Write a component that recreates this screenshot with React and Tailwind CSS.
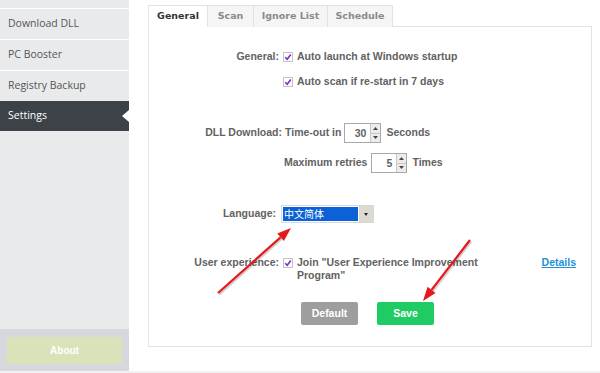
import React from 'react';

const navItems = ['Download DLL', 'PC Booster', 'Registry Backup'];
const tabs = ['General', 'Scan', 'Ignore List', 'Schedule'];

function Check() {
  return (
    <span className="w-[10px] h-[10px] border border-[#c4c4c4] bg-white flex items-center justify-center shrink-0">
      <svg width="8" height="8" viewBox="0 0 8 8">
        <path d="M1.2 4.2 L3.2 6.2 L6.8 1.6" fill="none" stroke="#7a2ccf" strokeWidth="1.6" />
      </svg>
    </span>
  );
}

function Spinner({ value, width }) {
  return (
    <div className={`h-[20px] ${width} border border-[#a9a9a9] bg-white flex`}>
      <span className="flex-1 text-right pr-[4px] leading-[18px]">{value}</span>
      <span className="w-[10px] border-l border-[#c8c8c8] flex flex-col bg-[#ececec]">
        <span className="flex-1 flex items-center justify-center border-b border-[#c8c8c8]">
          <svg width="5" height="3" viewBox="0 0 5 3"><path d="M0 3 L2.5 0 L5 3Z" fill="#444" /></svg>
        </span>
        <span className="flex-1 flex items-center justify-center">
          <svg width="5" height="3" viewBox="0 0 5 3"><path d="M0 0 L2.5 3 L5 0Z" fill="#444" /></svg>
        </span>
      </span>
    </div>
  );
}

function Arrow({ x1, y1, x2, y2 }) {
  const a = Math.atan2(y2 - y1, x2 - x1);
  const len = 14, half = 5;
  const bx = x2 - len * Math.cos(a), by = y2 - len * Math.sin(a);
  const p1 = `${bx + half * Math.sin(a)},${by - half * Math.cos(a)}`;
  const p2 = `${bx - half * Math.sin(a)},${by + half * Math.cos(a)}`;
  return (
    <g>
      <line x1={x1 + 1} y1={y1 + 1.5} x2={bx + 1} y2={by + 1.5} stroke="rgba(0,0,0,0.18)" strokeWidth="2.5" />
      <line x1={x1} y1={y1} x2={bx} y2={by} stroke="#e3191c" strokeWidth="2.2" />
      <polygon points={`${x2},${y2} ${p1} ${p2}`} fill="#e3191c" />
    </g>
  );
}

export default function App() {
  return (
    <div className="relative w-[600px] h-[373px] bg-white flex overflow-hidden font-['Liberation_Sans',Arial,sans-serif]">
      {/* sidebar */}
      <aside className="w-[129px] h-[371px] bg-[#e9eaec] flex flex-col font-['Open_Sans',sans-serif] text-[10.5px] text-[#555]">
        <div className="h-[9px] border-b border-white" />
        {navItems.map((n, i) => (
          <div key={n} className={`${i === 2 ? 'h-[30px]' : 'h-[31px]'} ${i < 2 ? 'border-b border-white' : ''} flex items-center pl-[8px]`}>
            {n}
          </div>
        ))}
        <div className="relative h-[30px] bg-[#3d4249] text-white flex items-center pl-[8px]">
          Settings
          <span className="absolute right-0 top-[9px] w-0 h-0 border-y-[6px] border-y-transparent border-r-[7px] border-r-white" />
        </div>
        <div className="flex-1" />
        <div className="h-[42px] bg-[#d5d8dc] px-[7px] pt-[8px]">
          <div className="h-[27px] bg-[#d8e3ba] text-white font-['Liberation_Sans',sans-serif] font-bold text-[10px] flex items-center justify-center">
            About
          </div>
        </div>
      </aside>

      {/* main */}
      <main className="flex-1 pl-[19px] pt-[5px] text-[10.5px] font-bold text-[#626262]">
        <div className="flex h-[22px] text-[9.5px] font-['DejaVu_Sans',sans-serif]">
          {tabs.map((t, i) => (
            <div
              key={t}
              className={
                i === 0
                  ? 'w-[60px] bg-white border border-b-0 border-[#e2e2e2] flex items-center justify-center text-[#333] relative z-10'
                  : `${i === 1 ? 'w-[46px]' : i === 2 ? 'w-[74px]' : 'w-[65px]'} bg-[#f5f5f5] border border-l-0 border-b-0 border-[#e2e2e2] flex items-center justify-center text-[#8a8a8a]`
              }
            >
              {t}
            </div>
          ))}
        </div>
        <div className="w-[444px] h-[321px] border border-[#e2e2e2] -mt-px flex flex-col">
          <div className="flex items-center h-[20px] mt-[20px]">
            <span className="w-[130px] text-right">General:</span>
            <span className="ml-[4px]"><Check /></span>
            <span className="ml-[4px]">Auto launch at Windows startup</span>
          </div>
          <div className="flex items-center h-[20px] mt-[5px]">
            <span className="w-[130px]" />
            <span className="ml-[4px]"><Check /></span>
            <span className="ml-[4px]">Auto scan if re-start in 7 days</span>
          </div>

          <div className="flex items-center h-[20px] mt-[31px]">
            <span className="w-[133px] text-right">DLL Download:</span>
            <span className="ml-[3px]">Time-out in</span>
            <span className="ml-[3px]"><Spinner value="30" width="w-[37px]" /></span>
            <span className="ml-[5px]">Seconds</span>
          </div>
          <div className="flex items-center h-[20px] mt-[10px]">
            <span className="w-[134px]" />
            <span className="ml-[1px]">Maximum retries</span>
            <span className="ml-[4px]"><Spinner value="5" width="w-[36px]" /></span>
            <span className="ml-[5px]">Times</span>
          </div>

          <div className="flex items-center h-[20px] mt-[31px]">
            <span className="w-[127px] text-right">Language:</span>
            <div className="ml-[5px] h-[18px] w-[93px] border border-[#d8d8d8] bg-white flex">
              <span className="flex-1 m-[1px] bg-[#0a62d6] text-white font-normal text-[10px] leading-[14px] pl-[1px] font-['Noto_Sans_CJK_SC',sans-serif]">
                中文简体
              </span>
              <span className="w-[14px] bg-[#dcdad0] flex items-center justify-center">
                <svg width="4" height="3" viewBox="0 0 4 3"><path d="M0 0 L2 3 L4 0Z" fill="#222" /></svg>
              </span>
            </div>
          </div>

          <div className="flex items-start mt-[32px] leading-[13px]">
            <span className="w-[130px] text-right">User experience:</span>
            <span className="ml-[4px] mt-[2px]"><Check /></span>
            <span className="ml-[4px] w-[195px]">Join "User Experience Improvement Program"</span>
            <span className="ml-auto mr-[15px] text-[#1d90d8] underline">Details</span>
          </div>

          <div className="flex mt-[20px] pl-[152px] gap-[19px]">
            <div className="w-[57px] h-[23px] rounded-[2px] bg-[#9e9e9e] text-white flex items-center justify-center">Default</div>
            <div className="w-[57px] h-[23px] rounded-[2px] bg-[#1fcb63] text-white flex items-center justify-center">Save</div>
          </div>
        </div>
      </main>

      <div className="absolute left-0 bottom-0 w-full h-[2px] bg-[#f1f1f1]" />

      <svg className="absolute inset-0 pointer-events-none" width="600" height="373">
        <Arrow x1={218} y1={293} x2={291} y2={228} />
        <Arrow x1={470} y1={240} x2={423} y2={301} />
      </svg>
    </div>
  );
}
